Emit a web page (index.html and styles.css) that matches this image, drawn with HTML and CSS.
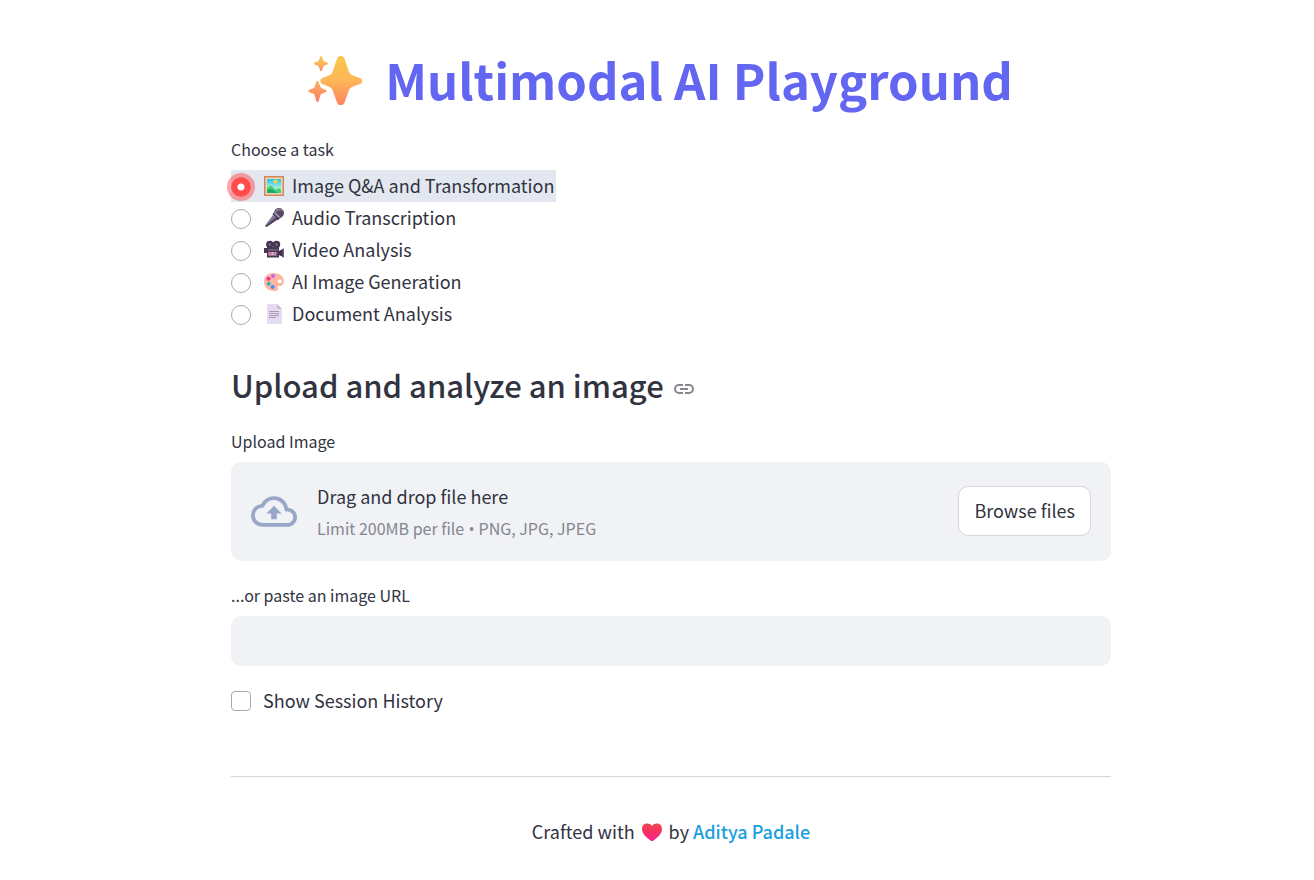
FILE: index.html
```html
<!DOCTYPE html>
<html lang="en">
<head>
<meta charset="utf-8">
<meta name="viewport" content="width=device-width, initial-scale=1">
<title>Multimodal AI Playground</title>
<link rel="stylesheet" href="styles.css">
</head>
<body>
<div class="page">
<main class="column">
  <h1 class="title">
    <svg class="title-icon" viewBox="0 0 56 52" aria-hidden="true">
      <defs>
        <linearGradient id="spark" x1="0" y1="0" x2="0" y2="1">
          <stop offset="0" stop-color="#fac64b"/><stop offset=".5" stop-color="#fcb757"/><stop offset="1" stop-color="#fd8263"/>
        </linearGradient>
        <linearGradient id="spark-low" x1="0" y1="0" x2="0" y2="1">
          <stop offset="0" stop-color="#fcb259"/><stop offset="1" stop-color="#fd7c68"/>
        </linearGradient>
      </defs>
      <path fill="url(#spark)" d="M30 3c1-4 7-4 8 0l4 12c1 3 2 4 4 5l8 3c3 1 3 5 0 6l-8 3c-2 1-3 2-4 5l-4 11c-1 4-7 4-8 0l-4-11c-1-3-2-4-4-5l-7-3c-3-1-3-5 0-6l7-3c2-1 3-2 4-5z"/>
      <path fill="url(#spark)" d="M12.500 1c.4-1.300 1.700-1.300 2 0l1.200 3.300c.3.800.8 1.200 1.500 1.500l2.800 1c1 .4 1 1.500 0 2l-2.800 1c-.7.300-1.200.8-1.500 1.500l-1.200 3.500c-.4 1.200-1.600 1.200-2 0l-1.300-3.500c-.3-.7-.8-1.200-1.500-1.500l-2.800-1c-1-.4-1-1.600 0-2l2.800-1c.7-.3 1.200-.7 1.500-1.500z"/>
      <path fill="url(#spark-low)" d="M8.500 27c.5-1.600 2-1.600 2.500 0l1.800 5c.4 1 1 1.500 1.800 1.800l3.600 1.400c1.300.5 1.300 2 0 2.500l-3.600 1.400c-.9.300-1.400.9-1.800 1.800l-1.700 6c-.5 1.600-2.100 1.600-2.600 0l-1.700-6c-.3-.9-.9-1.500-1.800-1.800l-3.700-1.400c-1.300-.5-1.300-2 0-2.500L5 33.800c.9-.3 1.400-.8 1.800-1.800z"/>
    </svg>
    <span>Multimodal AI Playground</span>
  </h1>

  <fieldset class="tasks">
    <legend class="label">Choose a task</legend>
    <label class="option option-active">
      <input class="radio" type="radio" name="task" checked>
      <svg class="emoji" viewBox="0 0 20 20" aria-hidden="true">
        <defs><linearGradient id="sky" x1="0" y1="0" x2="0" y2="1"><stop offset="0" stop-color="#25c5e4"/><stop offset="1" stop-color="#c9f8ed"/></linearGradient></defs>
        <path fill="#cf875c" d="M0 0h20v20H0z"/><path fill="#f5d5b3" d="M1.500 1.500h17v17h-17z"/>
        <path fill="url(#sky)" d="M3 3h14v12H3z"/><circle cx="11.500" cy="5.500" r="2" fill="#ffcf3d"/>
        <path fill="#b9f0c4" d="m3 11 3.500-3L12 13l3-2 2 2v4H3z"/><path fill="#3bd17b" d="m3 12 3.500-3 5.500 5 3-2 2 2v3H3z"/><path fill="#18a969" d="m3 14 4-1 7 4H3z"/>
      </svg>
      <span>Image Q&amp;A and Transformation</span>
    </label>
    <label class="option">
      <input class="radio" type="radio" name="task">
      <svg class="emoji" viewBox="0 0 20 20" aria-hidden="true">
        <path fill="#80758c" d="m9 7 4.500 4.500L2.500 19 .8 18z"/><path fill="#51455f" d="m11 10 2.500 1.500L2.500 19l-1-1z"/>
        <path fill="#382c4b" d="m8.500 6 3-3 6 5.800-3.700 3.400z"/><circle cx="15" cy="5" r="5" fill="#594968"/>
        <path fill="#85778f" d="M11 3c2-4 8-3 9 1-3-2-6-2-8 1z"/><path stroke="#b5a9bf" stroke-width="1.200" d="m10.500 4.500 5 5"/>
      </svg>
      <span>Audio Transcription</span>
    </label>
    <label class="option">
      <input class="radio" type="radio" name="task">
      <svg class="emoji" viewBox="0 0 20 20" aria-hidden="true">
        <circle cx="5.800" cy="4.500" r="3.700" fill="#433350"/><circle cx="12.500" cy="4.500" r="3.700" fill="#433350"/>
        <path fill="#483755" d="M0 8h4v5H0zM3 7h12v10.500H3z"/><path fill="#3c2b4a" d="m15 11 4-2v8l-4-2z"/>
        <path fill="#8d7b9b" d="M4 9.500h10v1H4z"/><path fill="#d0bdd5" d="M4.500 12h8v3.500h-8z"/>
        <path fill="#ef3979" d="M5.500 12.500h2v2h-2zm4 0h2v2h-2z"/><circle cx="5.800" cy="4.500" r="1.200" fill="#826e91"/><circle cx="12.500" cy="4.500" r="1.200" fill="#826e91"/>
        <path fill="#745f80" d="M18.500 8.500H20v9h-1.500z"/>
      </svg>
      <span>Video Analysis</span>
    </label>
    <label class="option">
      <input class="radio" type="radio" name="task">
      <svg class="emoji" viewBox="0 0 20 20" aria-hidden="true">
        <path fill="#ffb5a0" d="M10 1c6 0 10 4 10 8 0 3-2 5-4 5-3 0-3 1-2 2s-1 3-4 3C4 19 0 15 0 9.500S4 1 10 1z"/>
        <circle cx="15.800" cy="9.300" r="2" fill="#fff"/><circle cx="9" cy="4" r="2" fill="#b867ed"/><circle cx="4.500" cy="6.700" r="2" fill="#ed338c"/><circle cx="4.800" cy="11.700" r="2" fill="#27bdb2"/><circle cx="8.700" cy="15" r="2" fill="#3f91f5"/>
      </svg>
      <span>AI Image Generation</span>
    </label>
    <label class="option">
      <input class="radio" type="radio" name="task">
      <svg class="emoji" viewBox="0 0 20 20" aria-hidden="true">
        <path fill="#e6dcf1" d="M3 0h10l5 5v15H3z"/><path fill="#c8bdd4" d="M13 0v5h5z"/>
        <path stroke="#a69cb1" d="M5 7.500h10M5 9.500h10M5 11.500h10M5 13.500h7"/>
      </svg>
      <span>Document Analysis</span>
    </label>
  </fieldset>

  <h2 class="heading">
    <span>Upload and analyze an image</span>
    <a class="anchor" href="#upload" aria-label="Link to heading">
      <svg viewBox="0 0 20 12" aria-hidden="true"><path d="M9 2H5a4 4 0 0 0 0 8h4M11 2h4a4 4 0 0 1 0 8h-4M6 6h8"/></svg>
    </a>
  </h2>

  <label class="label" for="upload">Upload Image</label>
  <section class="uploader">
    <svg class="cloud" viewBox="0 4 24 16" aria-hidden="true"><path d="M19.350 10.040A7.490 7.490 0 0 0 12 4C9.110 4 6.600 5.640 5.350 8.040A5.994 5.994 0 0 0 0 14c0 3.310 2.690 6 6 6h13c2.760 0 5-2.240 5-5 0-2.640-2.050-4.780-4.650-4.960zM19 18H6c-2.210 0-4-1.790-4-4 0-2.050 1.530-3.760 3.560-3.970l1.070-.11.500-.95A5.469 5.469 0 0 1 12 6c2.620 0 4.880 1.860 5.390 4.430l.3 1.500 1.530.11A2.980 2.980 0 0 1 22 15c0 1.650-1.350 3-3 3zM8 13h2.550v3h2.900v-3H16l-4-4z"/></svg>
    <div class="drop-text">
      <span>Drag and drop file here</span>
      <span class="hint">Limit 200MB per file<span class="bullet"> • </span>PNG, JPG, JPEG</span>
    </div>
    <button class="browse" id="upload" type="button">Browse files</button>
  </section>

  <label class="label label-url" for="url">...or paste an image URL</label>
  <input class="url" id="url" type="text">

  <label class="history"><input class="checkbox" type="checkbox"><span>Show Session History</span></label>

  <hr class="rule">
  <footer class="footer">
    <span>Crafted with</span>
    <svg class="heart" viewBox="0 0 20 18" aria-label="love">
      <defs><linearGradient id="love" x1="0" y1="0" x2="0" y2="1"><stop offset="0" stop-color="#ef4752"/><stop offset=".5" stop-color="#f52f62"/><stop offset="1" stop-color="#fd25a0"/></linearGradient></defs>
      <path fill="url(#love)" d="M10 3C7-1 0 0 0 6c0 5 5 9 8.500 11.500q1.500 1 3 0C15 15 20 11 20 6c0-6-7-7-10-3z"/>
    </svg>
    <span>by <a class="author" href="#author">Aditya Padale</a></span>
  </footer>
</main>
</div>
</body>
</html>
```
FILE: styles.css
```css
* { box-sizing: border-box; }

body {
  margin: 0;
  background: #fff;
  color: #31333f;
  font-family: "Source Sans Pro", "Noto Sans CJK SC", sans-serif;
  font-size: 18px;
  line-height: 30px;
}

.page { padding: 48px 0 32px 28px; }

.column {
  display: flex;
  flex-direction: column;
  max-width: 880px;
  margin: 0 auto;
}

.title {
  display: flex;
  align-items: center;
  justify-content: center;
  gap: 22px;
  margin: 0 0 26px;
  padding-right: 22px;
  color: #6366f1;
  font-size: 49px;
  font-weight: 700;
  line-height: 62px;
}
.title-icon { flex: none; width: 56px; height: 50px; margin-top: 4px; }

.label { padding: 0 0 2px; font-size: 16px; line-height: 26px; }

.tasks {
  display: flex;
  flex-direction: column;
  align-items: flex-start;
  min-width: 0;
  margin: 0;
  padding: 0;
  border: 0;
}
.tasks .label { margin-bottom: 6px; }

.option {
  display: flex;
  align-items: center;
  padding: 0 2px 2px 0;
  cursor: pointer;
}
.option-active { background: #e3e8f0; }

.radio {
  appearance: none;
  width: 20px;
  height: 20px;
  margin: 4px 13px 0 0;
  border: 1px solid #a9aaae;
  border-radius: 50%;
  background: #fff;
}
.radio:checked {
  border: 0;
  background: radial-gradient(circle, #fff 3px, #ff4b4b 4px);
  box-shadow: 0 0 0 4px #ff4b4b80;
}

.emoji { flex: none; width: 20px; height: 20px; margin: 2px 8px 0 0; }

.heading {
  display: flex;
  align-items: center;
  gap: 10px;
  margin: 36px 0 24px;
  font-size: 31px;
  font-weight: 500;
  line-height: 38px;
}
.anchor { display: flex; padding-top: 8px; }
.anchor svg { width: 20px; height: 12px; fill: none; stroke: #85868e; stroke-width: 2; }

.uploader {
  display: flex;
  align-items: center;
  gap: 20px;
  margin-top: 6px;
  padding: 16px 20px 17px;
  border-radius: 10px;
  background: #f0f2f6;
}
.cloud { flex: none; width: 46px; height: 31px; fill: #98a7c6; }
.drop-text {
  display: flex;
  flex: 1;
  flex-direction: column;
  padding-top: 2px;
  line-height: 32px;
}
.hint { color: #85868e; font-size: 16px; }
.bullet { font-family: "Open Sans", sans-serif; line-height: 1; }

.browse {
  height: 50px;
  padding: 0 15px 2px;
  border: 1px solid #d6d6d9;
  border-radius: 10px;
  background: #fff;
  color: inherit;
  font: inherit;
}

.label-url { margin-top: 21px; }
.url {
  width: 100%;
  height: 50px;
  margin-top: 6px;
  padding: 0 16px;
  border: 0;
  border-radius: 10px;
  background: #f0f2f6;
  color: inherit;
  font: inherit;
}

.history {
  display: flex;
  align-items: center;
  align-self: flex-start;
  gap: 12px;
  margin-top: 19px;
  padding-bottom: 2px;
}
.checkbox {
  appearance: none;
  width: 20px;
  height: 20px;
  margin: 2px 0 0;
  border: 1px solid #a9aaae;
  border-radius: 4px;
  background: #fff;
}

.rule {
  width: 100%;
  margin: 59px 0 39px;
  border: 0;
  border-top: 1px solid #d6d6d9;
}

.footer {
  display: flex;
  align-items: center;
  justify-content: center;
  gap: 7px;
  padding-bottom: 2px;
}
.heart { width: 20px; height: 18px; margin-top: 2px; }
.author { color: #1b9fe0; font-weight: 500; text-decoration: none; }
```
